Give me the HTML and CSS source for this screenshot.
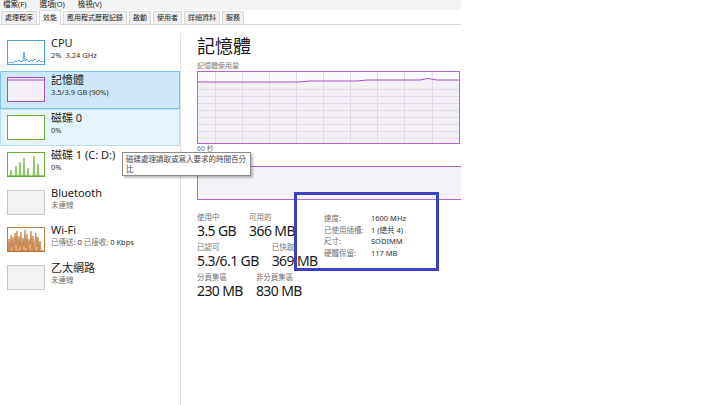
FILE: index.html
```html
<!DOCTYPE html>
<html lang="zh-Hant">
<head>
  <meta charset="UTF-8" />
  <title>工作管理員</title>
  <link rel="stylesheet" href="styles.css">
</head>
<body>
  <div class="window">
    <div class="menubar">
      <span>檔案(F)</span>
      <span>選項(O)</span>
      <span>檢視(V)</span>
    </div>
    <div class="tabs">
      <span class="tab">處理程序</span>
      <span class="tab active">效能</span>
      <span class="tab">應用程式歷程記錄</span>
      <span class="tab">啟動</span>
      <span class="tab">使用者</span>
      <span class="tab">詳細資料</span>
      <span class="tab">服務</span>
    </div>

    <div class="main">
      <div class="sidebar">
        <div class="item">
          <svg class="thumb" width="38" height="25" viewBox="0 0 38 25">
            <rect x="0.5" y="0.5" width="37" height="24" fill="#fff" stroke="#4ba3dc" />
            <polyline points="1,23 4,22 6,23 8,21 10,22 12,20 14,22 16,21 17,12 18,21 20,19 22,22 24,20 26,21 28,19 30,22 32,20 34,22 37,21" fill="none" stroke="#2f8fd0" stroke-width="0.8" />
          </svg>
          <div class="info">
            <div class="name">CPU</div>
            <div class="sub dark">2% &nbsp;3.24 GHz</div>
          </div>
        </div>

        <div class="item selected">
          <svg class="thumb" width="38" height="25" viewBox="0 0 38 25">
            <rect x="0.5" y="0.5" width="37" height="24" fill="#f3eff5" stroke="#a752c9" />
            <line x1="1" y1="3" x2="37" y2="3" stroke="#a752c9" stroke-width="1" />
            <line x1="10" y1="2.2" x2="26" y2="2.2" stroke="#c9a0dc" stroke-width="0.6" />
          </svg>
          <div class="info">
            <div class="name">記憶體</div>
            <div class="sub dark">3.5/3.9 GB (90%)</div>
          </div>
        </div>

        <div class="item hover">
          <svg class="thumb" width="38" height="25" viewBox="0 0 38 25">
            <rect x="0.5" y="0.5" width="37" height="24" fill="#fff" stroke="#6aae38" />
          </svg>
          <div class="info">
            <div class="name">磁碟 0</div>
            <div class="sub dark">0%</div>
          </div>
        </div>

        <div class="item">
          <svg class="thumb" width="38" height="25" viewBox="0 0 38 25">
            <rect x="0.5" y="0.5" width="37" height="24" fill="#fff" stroke="#6aae38" />
            <polygon points="1,24 3,24 4,18 5,24 8,24 9,14 10,24 12,24 13,10 14,24 16,24 17,6 18,24 20,24 21,16 22,24 26,24 27,4 28,24 30,24 31,12 32,24 37,24" fill="#a6da7c" stroke="#5aa62a" stroke-width="0.6" />
          </svg>
          <div class="info">
            <div class="name">磁碟 1 (C: D:)</div>
            <div class="sub dark">0%</div>
          </div>
        </div>

        <div class="item">
          <svg class="thumb" width="38" height="25" viewBox="0 0 38 25">
            <rect x="0.5" y="0.5" width="37" height="24" fill="#f2f2f2" stroke="#c8c8c8" />
          </svg>
          <div class="info">
            <div class="name">Bluetooth</div>
            <div class="sub">未連線</div>
          </div>
        </div>

        <div class="item">
          <svg class="thumb" width="38" height="25" viewBox="0 0 38 25">
            <rect x="0.5" y="0.5" width="37" height="24" fill="#fff" stroke="#c0793a" />
            <polygon points="1,24 2,12 3,22 4,8 5,20 6,10 7,24 8,6 9,18 10,4 11,22 12,9 13,20 14,5 15,24 16,11 17,19 18,3 19,21 20,7 21,24 22,12 23,17 24,4 25,22 26,9 27,24 28,13 29,6 30,20 31,10 32,24 33,14 34,24 37,24" fill="#e3a97a" stroke="#b0601c" stroke-width="0.6" />
          </svg>
          <div class="info">
            <div class="name">Wi-Fi</div>
            <div class="sub">已傳送: <b>0</b> 已接收: <b>0 Kbps</b></div>
          </div>
        </div>

        <div class="item">
          <svg class="thumb" width="38" height="25" viewBox="0 0 38 25">
            <rect x="0.5" y="0.5" width="37" height="24" fill="#f2f2f2" stroke="#c8c8c8" />
          </svg>
          <div class="info">
            <div class="name">乙太網路</div>
            <div class="sub">未連線</div>
          </div>
        </div>
      </div>

      <div class="content">
        <h1>記憶體</h1>
        <div class="caption">記憶體使用量</div>
        <svg class="chart" width="263" height="73" viewBox="0 0 263 73">
          <rect x="0.5" y="0.5" width="262" height="72" fill="#f3f0f5" />
          <polygon points="1,1 262,1 262,9 240,9 231,8 228,8 223,9 170,9 160,10 112,10 102,11 1,11" fill="#faf9fb" />
          <g stroke="#e3d8e9" stroke-width="1">
            <line x1="0" y1="18.5" x2="263" y2="18.5" />
            <line x1="0" y1="25.5" x2="263" y2="25.5" />
            <line x1="0" y1="32.5" x2="263" y2="32.5" />
            <line x1="0" y1="39.5" x2="263" y2="39.5" />
            <line x1="0" y1="46.5" x2="263" y2="46.5" />
            <line x1="0" y1="53.5" x2="263" y2="53.5" />
            <line x1="0" y1="60.5" x2="263" y2="60.5" />
            <line x1="0" y1="67.5" x2="263" y2="67.5" />
            <line x1="18.5" y1="0" x2="18.5" y2="73" />
            <line x1="45.5" y1="0" x2="45.5" y2="73" />
            <line x1="72.5" y1="0" x2="72.5" y2="73" />
            <line x1="99.5" y1="0" x2="99.5" y2="73" />
            <line x1="126.5" y1="0" x2="126.5" y2="73" />
            <line x1="153.5" y1="0" x2="153.5" y2="73" />
            <line x1="180.5" y1="0" x2="180.5" y2="73" />
            <line x1="207.5" y1="0" x2="207.5" y2="73" />
            <line x1="235.5" y1="0" x2="235.5" y2="73" />
          </g>
          <polyline points="1,11 102,11 112,10 160,10 170,9 223,9 231,7.5 240,9 262,9" fill="none" stroke="#a752c9" stroke-width="1" />
          <rect x="0.5" y="0.5" width="262" height="72" fill="none" stroke="#b266d2" />
        </svg>
        <div class="caption seconds">60 秒</div>
        <div class="composition"></div>

        <div class="stats">
          <div class="left-stats">
            <div class="row">
              <div class="stat"><div class="label">使用中</div><div class="value">3.5 GB</div></div>
              <div class="stat"><div class="label">可用的</div><div class="value">366 MB</div></div>
            </div>
            <div class="row">
              <div class="stat"><div class="label">已認可</div><div class="value">5.3/6.1 GB</div></div>
              <div class="stat"><div class="label">已快取</div><div class="value">369 MB</div></div>
            </div>
            <div class="row">
              <div class="stat"><div class="label">分頁集區</div><div class="value">230 MB</div></div>
              <div class="stat"><div class="label">非分頁集區</div><div class="value">830 MB</div></div>
            </div>
          </div>
          <div class="details">
            <span class="key">速度:</span><span>1600 MHz</span>
            <span class="key">已使用插槽:</span><span>1 (總共 4)</span>
            <span class="key">尺寸:</span><span>SODIMM</span>
            <span class="key">硬體保留:</span><span>117 MB</span>
          </div>
        </div>
      </div>
    </div>

    <div class="tooltip">磁碟處理讀取或寫入要求的時間百分比</div>
    <div class="highlight"></div>
  </div>
</body>
</html>
```

FILE: styles.css
```css
body {
  margin: 0;
  background: #fff;
  font-family: "Noto Sans", "Noto Sans CJK TC", sans-serif;
  color: #1a1a1a;
}
.window {
  position: relative;
  width: 461px;
  height: 405px;
  overflow: hidden;
  background: #fff;
}
.menubar {
  height: 10px;
  background: #f3f4f6;
  display: flex;
  gap: 13px;
  padding-left: 3px;
  font-size: 7.5px;
  line-height: 9px;
  color: #222;
}
.tabs {
  height: 15px;
  display: flex;
  align-items: flex-end;
  gap: 2px;
  padding-left: 1px;
  border-bottom: 1px solid #d9d9d9;
  box-sizing: border-box;
}
.tab {
  height: 12px;
  padding: 0 3px;
  font-size: 7px;
  line-height: 12px;
  background: #f0f0f0;
  border: 1px solid #d9d9d9;
  border-bottom: none;
  color: #222;
}
.tab.active {
  height: 14px;
  line-height: 13px;
  background: #fff;
  margin-bottom: -1px;
}
.main {
  display: flex;
  height: 380px;
}
.sidebar {
  width: 181px;
  padding-top: 8.5px;
  border-right: 1px solid #e3e3e3;
  margin-top: 8px;
  box-sizing: border-box;
}
.item {
  height: 37.5px;
  display: flex;
  gap: 6px;
  padding-left: 6px;
  box-sizing: border-box;
  border: 1px solid transparent;
}
.item:first-child {
  margin-top: -8px;
}
.item .thumb {
  margin-top: 5px;
  flex: none;
}
.item.selected {
  background: #cce8f7;
  border-color: #7fc3ea;
}
.item.hover {
  background: #e5f3fb;
  border-color: #b9def3;
}
.info {
  padding-top: 1px;
}
.name {
  font-size: 11px;
  line-height: 14px;
  color: #1a1a1a;
}
.sub {
  font-size: 7.5px;
  line-height: 10px;
  color: #707070;
}
.sub.dark {
  color: #333;
}
.sub b {
  color: #333;
  font-weight: normal;
}
.content {
  padding-left: 16px;
  flex: 1;
}
h1 {
  margin: 0;
  padding-top: 9px;
  font-size: 18px;
  line-height: 24px;
  font-weight: normal;
  color: #1a1a1a;
}
.caption {
  font-size: 7px;
  line-height: 9px;
  color: #777;
  margin-top: 3px;
  margin-bottom: 1px;
}
.chart {
  display: block;
}
.caption.seconds {
  margin-top: 0;
}
.composition {
  margin-top: 13px;
  height: 34px;
  background: #f3f1f5;
  border: 1px solid #b266d2;
  border-right: none;
  box-sizing: border-box;
}
.stats {
  display: flex;
  align-items: flex-start;
  margin-top: 13px;
}
.left-stats {
  width: 127px;
}
.row {
  display: flex;
  gap: 13px;
  margin-bottom: 5px;
}
.label {
  font-size: 7.5px;
  line-height: 9px;
  margin-bottom: 1px;
  color: #707070;
  white-space: nowrap;
}
.value {
  font-size: 14px;
  line-height: 15px;
  letter-spacing: -0.6px;
  color: #1a1a1a;
  white-space: nowrap;
}
.details {
  display: grid;
  grid-template-columns: 47px auto;
  row-gap: 2px;
  padding-top: 1px;
  font-size: 7.5px;
  line-height: 9.5px;
  color: #333;
}
.details .key {
  color: #707070;
}
.tooltip {
  position: absolute;
  left: 122px;
  top: 152px;
  width: 121px;
  padding: 1px 3px;
  font-size: 7.5px;
  line-height: 10px;
  color: #444;
  background: #fff;
  border: 1px solid #8a8a8a;
  box-shadow: 2px 2px 2px rgba(0, 0, 0, 0.25);
}
.highlight {
  position: absolute;
  left: 294px;
  top: 192px;
  width: 145px;
  height: 79px;
  border: 3px solid #3c40c6;
  box-sizing: border-box;
}
```
